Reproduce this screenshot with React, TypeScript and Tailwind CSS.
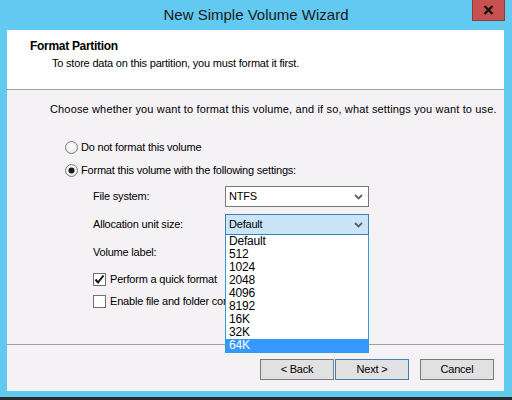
import React from "react";

const font = { fontFamily: '"Liberation Sans", Arial, sans-serif' };

function Chevron() {
  return (
    <svg width="9" height="6" viewBox="0 0 9 6" className="shrink-0">
      <path d="M1 1 L4.5 4.5 L8 1" fill="none" stroke="#606060" strokeWidth="1.8" />
    </svg>
  );
}

function Radio({ checked }: { checked?: boolean }) {
  return (
    <svg width="13" height="13" viewBox="0 0 13 13" className="shrink-0">
      <defs>
        <radialGradient id="rg" cx="50%" cy="40%" r="60%">
          <stop offset="0%" stopColor="#ffffff" />
          <stop offset="100%" stopColor="#e6e6e6" />
        </radialGradient>
      </defs>
      <circle cx="6.5" cy="6.5" r="6" fill="url(#rg)" stroke="#7a7a7a" strokeWidth="1" />
      {checked && <circle cx="6.5" cy="6.5" r="3" fill="#1a1a1a" />}
    </svg>
  );
}

function Check({ checked }: { checked?: boolean }) {
  return (
    <div className="w-[13px] h-[13px] border border-[#707070] bg-white shrink-0 flex items-center justify-center">
      {checked && (
        <svg width="11" height="11" viewBox="0 0 11 11">
          <path d="M1.5 5.5 L4 8.5 L9.5 1.5" fill="none" stroke="#111" strokeWidth="2" />
        </svg>
      )}
    </div>
  );
}

function Button({ label, primary }: { label: string; primary?: boolean }) {
  return (
    <div
      className={`w-[74px] h-[21px] flex items-center justify-center bg-[#e1e1e1] border text-black ${
        primary ? "border-[#3c7fb1]" : "border-[#7a7a7a]"
      }`}
    >
      {label}
    </div>
  );
}

export default function App() {
  const items = ["Default", "512", "1024", "2048", "4096", "8192", "16K", "32K", "64K"];
  return (
    <div className="w-[512px] h-[400px] bg-[#62c9f0] flex flex-col overflow-hidden" style={font}>
      {/* title bar */}
      <div className="h-[30px] flex shrink-0">
        <div className="w-[40px]" />
        <div className="flex-1 text-center text-[15px] leading-[30px] text-[#1b1b1b]">New Simple Volume Wizard</div>
        <div className="w-[33px] h-[21px] bg-[#c75050] border border-t-0 border-[#8e3b3b] flex items-center justify-center mr-[7px]">
          <svg width="11" height="10" viewBox="0 0 11 10">
            <path d="M1.5 1 L9.5 9 M9.5 1 L1.5 9" stroke="#111" strokeWidth="2.4" />
          </svg>
        </div>
      </div>
      {/* client */}
      <div className="ml-[7px] mr-[8px] h-[361px] bg-[#f5f2f6] flex flex-col text-black text-[11px] tracking-[-0.2px] whitespace-nowrap">
        <div className="h-[60px] bg-white border-b border-[#a0a0a0] shrink-0">
          <div className="pl-[23px] pt-[9px] font-bold text-[12px] leading-[15px] tracking-[-0.3px]">Format Partition</div>
          <div className="pl-[45px] pt-[2px] leading-[15px]">To store data on this partition, you must format it first.</div>
        </div>
        <div className="h-[254px] shrink-0 flex flex-col pt-[12px]">
          <div className="pl-[43px] h-[15px] leading-[15px] tracking-[0.15px]">
            Choose whether you want to format this volume, and if so, what settings you want to use.
          </div>
          <div className="pl-[58px] mt-[22px] h-[16px] flex items-center gap-[3px]">
            <Radio />
            <span>Do not format this volume</span>
          </div>
          <div className="pl-[58px] mt-[7px] h-[16px] flex items-center gap-[3px]">
            <Radio checked />
            <span>Format this volume with the following settings:</span>
          </div>
          <div className="pl-[86px] mt-[8px] h-[21px] flex items-center">
            <span className="w-[132px]">File system:</span>
            <div className="w-[144px] h-[21px] bg-white border border-[#7a7a7a] flex items-center pl-[3px] pr-[5px]">
              <span className="flex-1">NTFS</span>
              <Chevron />
            </div>
          </div>
          <div className="pl-[86px] mt-[7px] h-[21px] flex items-center">
            <span className="w-[132px]">Allocation unit size:</span>
            <div className="relative w-[144px] h-[21px]">
              <div className="w-full h-full bg-[#c9e5f7] border border-[#3c7fb1] flex items-center pl-[3px] pr-[5px]">
                <span className="flex-1">Default</span>
                <Chevron />
              </div>
              <div className="absolute left-0 top-[21px] w-full z-10 bg-white border border-[#2f9ce0] border-t-0 flex flex-col text-[12px] tracking-[-0.2px]">
                {items.map((it) => (
                  <div
                    key={it}
                    className={`h-[13px] leading-[13px] pl-[3px] ${it === "64K" ? "bg-[#3399ff] text-white" : ""}`}
                  >
                    {it}
                  </div>
                ))}
              </div>
            </div>
          </div>
          <div className="pl-[86px] mt-[7px] h-[21px] flex items-center">
            <span className="w-[132px]">Volume label:</span>
            <div className="w-[144px] h-[21px] bg-white border border-[#7a7a7a]" />
          </div>
          <div className="pl-[86px] mt-[10px] h-[13px] flex items-center gap-[4px]">
            <Check checked />
            <span>Perform a quick format</span>
          </div>
          <div className="pl-[86px] mt-[9px] h-[13px] flex items-center gap-[4px]">
            <Check />
            <span>Enable file and folder compression</span>
          </div>
        </div>
        <div className="flex-1 border-t border-[#a0a0a0] flex justify-end items-start pt-[14px] pr-[10px]">
          <div className="flex gap-[1px]">
            <Button label="< Back" />
            <Button label="Next >" primary />
          </div>
          <div className="w-[11px]" />
          <Button label="Cancel" />
        </div>
      </div>
      <div className="flex-1" />
      <div className="h-[3px] bg-[#2b2b2b] shrink-0" />
    </div>
  );
}
